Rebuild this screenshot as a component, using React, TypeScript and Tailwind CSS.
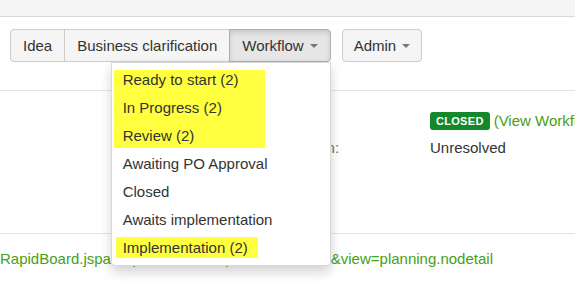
import React from 'react'

const menuItems = ['Awaiting PO Approval', 'Closed', 'Awaits implementation']

function Caret() {
  return <span className="ml-[6px] inline-block h-0 w-0 border-x-[4px] border-t-[4px] border-x-transparent border-t-[#777] align-middle" />
}

function WorkflowMenu() {
  return (
    <div className="absolute right-0 top-full z-10 w-[220px] rounded-b-[4px] border border-[rgba(0,0,0,0.15)] bg-white pb-[3px] shadow-[0_6px_12px_rgba(0,0,0,0.175)] leading-[28px]">
      {/* highlighted statuses */}
      <div className="ml-[2px] mt-[7px] flow-root h-[78px] w-[151px] bg-[#ffff40]">
        <div className="-mt-[4px]">
          <div className="pl-[9px]">Ready to start (2)</div>
          <div className="pl-[9px]">In Progress (2)</div>
          <div className="pl-[9px]">Review (2)</div>
        </div>
      </div>
      <div className="mt-[2px]">
        {menuItems.map((item) => (
          <div key={item} className="pl-[11px]">{item}</div>
        ))}
        <div className="pl-[4px]">
          <span className="inline-block h-[21px] bg-[#ffff40] pl-[7px] pr-[10px] leading-[21px]">Implementation (2)</span>
        </div>
      </div>
    </div>
  )
}

export default function App() {
  const btn = 'border border-[#ccc] bg-[#f5f5f5] py-[6px] leading-[19px] text-[#333]'

  return (
    <div className="h-[294px] w-[575px] overflow-hidden bg-white font-['Liberation_Sans',Arial,sans-serif] text-[15px] text-[#333]">
      {/* Top strip */}
      <div className="h-[17px] border-b border-[#d9d9d9] bg-[#f5f5f5]" />

      {/* Toolbar */}
      <div className="flex gap-[11px] pl-[10px] pt-[12px]">
        <div className="relative flex">
          <button className={`${btn} rounded-l-[4px] px-[12px]`}>Idea</button>
          <button className={`${btn} -ml-px px-[12px]`}>Business clarification</button>
          <button className="-ml-px flex items-center rounded-r-[4px] border border-[#adadad] bg-[#e6e6e6] px-[12px] py-[6px] leading-[19px] text-[#333] shadow-[inset_0_3px_5px_rgba(0,0,0,0.125)]">
            Workflow
            <Caret />
          </button>
          <WorkflowMenu />
        </div>
        <button className={`${btn} flex items-center rounded-[4px] px-[11px]`}>
          Admin
          <Caret />
        </button>
      </div>

      {/* Details */}
      <div className="mt-[28px] h-[143px] border-t border-[#e5e5e5]">
        <div className="grid grid-cols-[166px_1fr] gap-y-[7px] pl-[264px] pt-[20px] leading-[20px]">
          <div className="text-[#707070]">Status:</div>
          <div className="flex items-center whitespace-nowrap">
            <span className="inline-flex h-[18px] items-center rounded-[3px] bg-[#14892c] px-[6px] text-[11px] font-bold tracking-[0.3px] text-white">
              CLOSED
            </span>
            <span className="ml-[4px] text-[#46a015]">(View Workflow)</span>
          </div>
          <div className="text-[#707070]">Resolution:</div>
          <div>Unresolved</div>
        </div>
      </div>

      {/* Board link */}
      <div className="border-t border-[#e5e5e5] pt-[15px] leading-[20px]">
        <a className="whitespace-nowrap text-[#46a015]">RapidBoard.jspa?rapidView=52&amp;quickFilter=1025&amp;view=planning.nodetail</a>
      </div>
    </div>
  )
}
